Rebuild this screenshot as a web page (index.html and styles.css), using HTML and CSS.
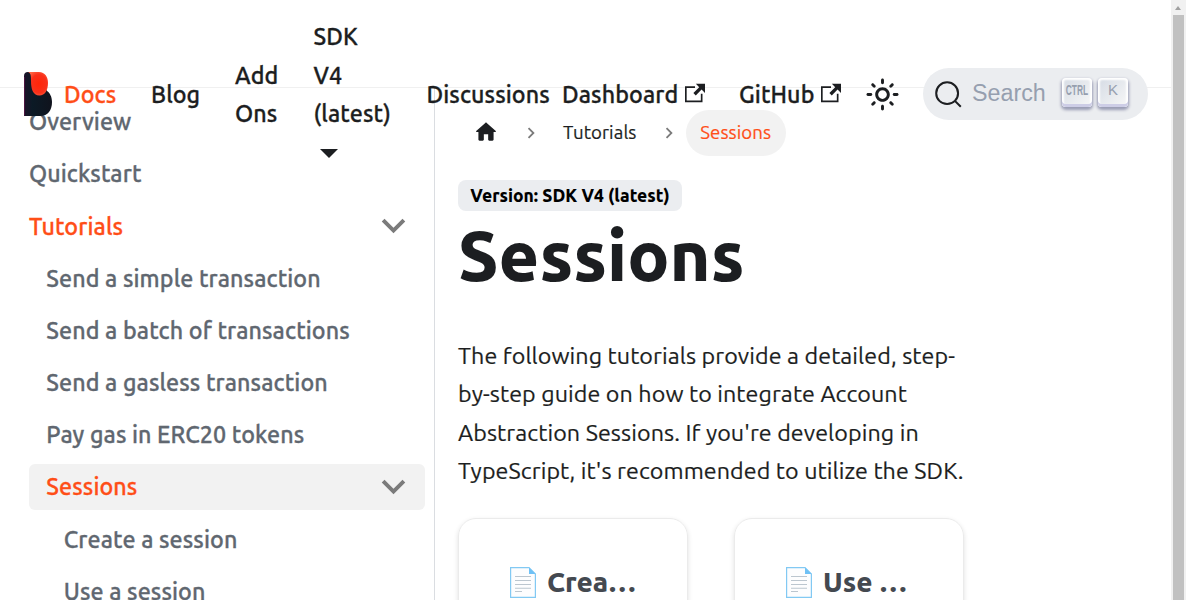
FILE: index.html
```html
<!DOCTYPE html>
<html lang="en">
<head>
<meta charset="utf-8">
<title>Sessions</title>
<link rel="stylesheet" href="styles.css">
</head>
<body>
<svg width="0" height="0" class="sprite">
  <symbol id="ext" viewBox="0 0 24 24"><path fill="currentColor" d="M21 13v10h-21v-19h12v2h-10v15h17v-8h2zm3-12h-10.988l4.035 4-6.977 7.070 2.828 2.828 6.977-7.070 4.125 4.172v-11z"/></symbol>
  <symbol id="chev" viewBox="0 0 24 24"><path fill="currentColor" d="M7.41 15.41L12 10.83l4.59 4.58L18 14l-6-6-6 6z"/></symbol>
  <symbol id="doc" viewBox="0 0 26 31"><path d="M.6.6h18.4l6.4 6.4v23.4H.6z" fill="#fdfdfe" stroke="#82c9f3" stroke-width="1.2"/><path d="M19 .4V7h6.6z" fill="#6fc1f6"/><path d="M5 9.5h16M5 13.5h16M5 17.5h16M5 21.3h16M5 24.5h7" stroke="#bcc6cf" stroke-width="1.1"/></symbol>
</svg>
<nav class="navbar">
  <svg class="logo" viewBox="0 0 28 44">
    <defs>
      <linearGradient id="ink" x1="0" x2="1"><stop offset="0" stop-color="#1c1228"/><stop offset=".3" stop-color="#0b1a26"/><stop offset="1" stop-color="#10131d"/></linearGradient>
      <radialGradient id="flame" cx=".55" cy=".5" r=".6"><stop offset="0" stop-color="#ff2508"/><stop offset=".65" stop-color="#f9301a"/><stop offset="1" stop-color="#ff6444"/></radialGradient>
    </defs>
    <path fill="url(#ink)" d="M0 4Q0 0 4 0h10l9 19c3 2 5 6 5 11 0 8-4 14-12 14H0z"/>
    <path fill="url(#flame)" d="M4 0h11c6 0 9 5 9 11 0 7-3 12.500-8.500 12.500C8.500 23.500 7 16 7 9 7 4 7 1 4 0z"/>
    <path d="M.5 43.500V5" stroke="#5b1648" stroke-width=".8"/>
  </svg>
  <a class="docs">Docs</a>
  <a class="blog">Blog</a>
  <a class="addons">Add<br>Ons</a>
  <a class="version-menu">SDK<br>V4<br>(latest)<span class="caret-line"><i class="caret"></i></span></a>
  <a class="discussions">Discussions</a>
  <a class="link"><span>Dashboard</span><svg class="ext"><use href="#ext"/></svg></a>
  <a class="link"><span>GitHub</span><svg class="ext"><use href="#ext"/></svg></a>
  <svg class="sun" viewBox="0 0 24 24"><path fill="currentColor" d="M12,9c1.650,0,3,1.350,3,3s-1.350,3-3,3s-3-1.350-3-3S10.350,9,12,9 M12,7c-2.760,0-5,2.240-5,5s2.240,5,5,5s5-2.240,5-5 S14.760,7,12,7L12,7z M2,13l2,0c0.550,0,1-0.450,1-1s-0.450-1-1-1l-2,0c-0.550,0-1,0.450-1,1S1.450,13,2,13z M20,13l2,0c0.550,0,1-0.450,1-1 s-0.450-1-1-1l-2,0c-0.550,0-1,0.450-1,1S19.450,13,20,13z M11,2v2c0,0.550,0.450,1,1,1s1-0.450,1-1V2c0-0.550-0.450-1-1-1S11,1.450,11,2z M11,20v2c0,0.550,0.450,1,1,1s1-0.450,1-1v-2c0-0.550-0.450-1-1-1S11,19.450,11,20z M5.990,4.580c-0.390-0.390-1.030-0.390-1.410,0 c-0.390,0.390-0.390,1.030,0,1.410l1.060,1.060c0.390,0.390,1.030,0.390,1.410,0s0.390-1.030,0-1.410L5.990,4.580z M18.360,16.950 c-0.390-0.390-1.030-0.390-1.410,0c-0.390,0.390-0.390,1.030,0,1.410l1.060,1.060c0.390,0.390,1.030,0.390,1.410,0c0.390-0.390,0.390-1.030,0-1.410 L18.360,16.950z M19.420,5.990c0.390-0.390,0.390-1.030,0-1.410c-0.390-0.390-1.030-0.390-1.410,0l-1.060,1.060c-0.390,0.390-0.390,1.030,0,1.410 s1.030,0.390,1.410,0L19.420,5.990z M7.050,18.360c0.390-0.390,0.390-1.030,0-1.410c-0.390-0.390-1.030-0.390-1.410,0l-1.060,1.060 c-0.390,0.390-0.390,1.030,0,1.410s1.030,0.390,1.410,0L7.050,18.360z"/></svg>
  <button class="search">
    <svg class="glass" viewBox="0 0 20 20"><path d="M14.386 14.386l4.088 4.088-4.088-4.088c-2.942 2.942-7.711 2.942-10.653 0s-2.942-7.711 0-10.653 7.711-2.942 10.653 0 2.942 7.711 0 10.653z" fill="none" stroke="currentColor" stroke-width="1.4" stroke-linecap="round"/></svg>
    <span class="search-text">Search</span>
    <kbd class="key"><span class="ctrl">CTRL</span></kbd><kbd class="key">K</kbd>
  </button>
</nav>
<div class="layout">
  <aside class="sidebar">
    <a class="item">Overview</a>
    <a class="item">Quickstart</a>
    <a class="item active">Tutorials<svg class="chev"><use href="#chev"/></svg></a>
    <div class="sub">
      <a class="item">Send a simple transaction</a>
      <a class="item">Send a batch of transactions</a>
      <a class="item">Send a gasless transaction</a>
      <a class="item">Pay gas in ERC20 tokens</a>
      <a class="item active current">Sessions<svg class="chev"><use href="#chev"/></svg></a>
      <div class="sub">
        <a class="item">Create a session</a>
        <a class="item">Use a session</a>
      </div>
    </div>
  </aside>
  <main class="content">
    <div class="crumbs">
      <svg class="home" viewBox="0 0 24 24"><path fill="currentColor" d="M10 19v-5h4v5c0 .550.450 1 1 1h3c.550 0 1-.450 1-1v-7h1.700c.460 0 .680-.570.330-.870L12.670 3.600c-.380-.340-.960-.340-1.340 0l-8.360 7.530c-.340.300-.130.870.330.870H5v7c0 .550.450 1 1 1h3c.550 0 1-.450 1-1z"/></svg>
      <svg class="sep"><use href="#chev"/></svg>
      <span class="crumb">Tutorials</span>
      <svg class="sep second"><use href="#chev"/></svg>
      <span class="crumb pill">Sessions</span>
    </div>
    <span class="badge">Version: SDK V4 (latest)</span>
    <h1>Sessions</h1>
    <p>The following tutorials provide a detailed, step-<br>by-step guide on how to integrate Account<br>Abstraction Sessions. If you're developing in<br>TypeScript, it's recommended to utilize the SDK.</p>
    <div class="cards">
      <a class="card"><svg class="doc"><use href="#doc"/></svg><span>Crea…</span></a>
      <a class="card"><svg class="doc"><use href="#doc"/></svg><span>Use …</span></a>
    </div>
  </main>
  <div class="scrollbar"><i class="arrow"></i><div class="thumb"></div></div>
</div>
</body>
</html>
```
FILE: styles.css
```css
* { box-sizing: border-box; }
body { margin: 0; height: 600px; overflow: hidden; background: #fff; color: #1c1e21; font-family: Ubuntu, "Noto Sans", sans-serif; font-size: 23.270px; font-weight: 400; letter-spacing: .09px; line-height: 38.4px; -webkit-text-stroke: .2px; }
svg { display: block; flex: none; }
.sprite { position: absolute; }
.navbar { position: absolute; z-index: 2; top: 0; left: 0; width: 1171px; height: 88px; padding: 14px 0 0 24px; background: #fff; border-bottom: 1px solid #f0f0f0; display: grid; grid-template-columns: 40px 87px 84px 78.500px 113px 135.500px 177px 127px 33px 24px 225px; grid-template-rows: 160px; align-items: center; font-weight: 500; -webkit-text-stroke: .3px; }
.logo { width: 28px; height: 44px; }
.docs, .active { color: #ff4e17; }
.caret-line { display: flex; align-items: center; height: 38.4px; padding: 3px 0 0 6px; }
.caret { border: 9px solid transparent; border-top-color: #1c1e21; border-bottom: 0; }
.link { display: flex; align-items: center; gap: 7px; }
.ext { width: 20px; height: 20px; margin-top: -3px; }
.sun { width: 35px; height: 35px; margin-left: -1px; }
.search { grid-column: 11; display: flex; align-items: center; width: 225px; height: 52px; margin: 0; padding: 0 0 0 11px; border: 0; border-radius: 26px; background: #ebedf0; color: #1c1e21; text-align: left; -webkit-text-stroke: 0; }
.glass { width: 29px; height: 29px; }
.search-text { width: 99px; padding-left: 9px; margin-top: -2px; color: #969faf; font: 23.270px "Liberation Sans", sans-serif; }
.key { display: flex; justify-content: center; width: 30px; height: 29px; margin: -3px 6px 0 0; padding-top: 2px; border-radius: 4px; background: linear-gradient(-225deg, #d5dbe4, #f8f8f8); box-shadow: inset 0 -3px 0 #cdcde6, inset 0 0 2px 2px #fff, 0 2px 3px 1px rgba(30,35,90,.4); color: #969faf; font: 15px/20px "Liberation Sans", sans-serif; }
.ctrl { font-size: 15px; font-weight: bold; transform: scaleX(.56); }
.layout { display: grid; grid-template-columns: 435px 736px 15px; height: 600px; }
.sidebar { height: 600px; padding: 98.500px 9px 0 11.500px; border-right: 1px solid #dadde1; color: #606770; font-weight: 500; -webkit-text-stroke: .3px; overflow: hidden; }
.item { display: flex; justify-content: space-between; align-items: center; height: 46px; margin-bottom: 6.170px; padding: 0 17.400px; border-radius: 6px; white-space: nowrap; }
.sub { padding-left: 17.450px; }
.current { background: #f2f2f2; }
.chev { width: 47px; height: 47px; margin-right: -9px; color: #7b7b7b; transform: rotate(180deg); }
.content { height: 600px; overflow: hidden; padding: 110px 24px 0 23px; }
.crumbs { display: flex; align-items: center; height: 46px; font-size: 18.620px; }
.home { width: 26px; height: 26px; margin: -2px 0 0 15px; }
.sep { width: 22px; height: 22px; margin: 0 21px; color: #7b7b7b; transform: rotate(90deg); }
.second { margin-right: 6px; }
.crumb { white-space: nowrap; }
.pill { padding: 0 14.700px; line-height: 46px; border-radius: 23px; background: #f2f2f2; color: #ff4e17; }
.badge { display: flex; justify-content: center; width: 224px; height: 31px; margin-top: 24px; border-radius: 8px; background: #ebedf0; color: #000; font-size: 17.450px; font-weight: 800; letter-spacing: 0; -webkit-text-stroke: 0; line-height: 31px; white-space: nowrap; }
h1 { margin: 0; height: 125px; font-size: 69.800px; line-height: 89px; font-weight: 800; letter-spacing: 0; -webkit-text-stroke: 0; }
p { margin: 0 0 28px; white-space: nowrap; }
.cards { display: grid; grid-template-columns: 230px 230px; gap: 46px; }
.card { display: flex; align-items: flex-start; gap: 11px; height: 180px; padding: 48px 50px; border: 1px solid #ebebeb; border-radius: 18px; box-shadow: 0 2px 5px rgba(0,0,0,.12); color: #444950; font-size: 27.900px; font-weight: 800; letter-spacing: 0; -webkit-text-stroke: 0; line-height: 29px; white-space: nowrap; }
.doc { width: 26px; height: 31px; margin-left: 1px; }
.scrollbar { background: #f1f1f1; padding: 5px 2px 0; }
.arrow { display: block; margin: 1px 0 5px 2px; width: 0; border: 3.500px solid transparent; border-top: 0; border-bottom: 4px solid #a0a0a0; }
.thumb { height: 585px; background: #c1c1c1; }
```
